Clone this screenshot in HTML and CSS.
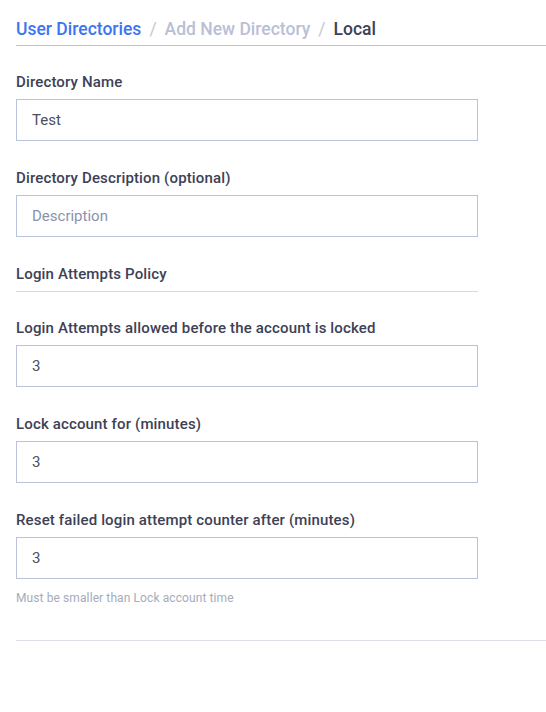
FILE: index.html
```html
<!DOCTYPE html>
<html lang="en">
<head>
    <meta charset="UTF-8">
    <meta name="viewport" content="width=device-width, initial-scale=1.0">
    <title>Add Directory - Local</title>
    <link rel="stylesheet" href="styles.css">
</head>
<body>
    <div class="page">
        <nav class="breadcrumb">
            <a href="#" class="crumb-link">User Directories</a>
            <span class="crumb-sep">/</span>
            <span class="crumb-muted">Add New Directory</span>
            <span class="crumb-sep">/</span>
            <span class="crumb-current">Local</span>
        </nav>

        <form class="dir-form">
            <div class="field">
                <label for="dir-name">Directory Name</label>
                <input type="text" id="dir-name" value="Test">
            </div>

            <div class="field">
                <label for="dir-desc">Directory Description (optional)</label>
                <input type="text" id="dir-desc" placeholder="Description">
            </div>

            <h3 class="section-title">Login Attempts Policy</h3>

            <div class="field">
                <label for="max-attempts">Login Attempts allowed before the account is locked</label>
                <input type="text" id="max-attempts" value="3">
            </div>

            <div class="field">
                <label for="lock-time">Lock account for (minutes)</label>
                <input type="text" id="lock-time" value="3">
            </div>

            <div class="field last">
                <label for="reset-time">Reset failed login attempt counter after (minutes)</label>
                <input type="text" id="reset-time" value="3">
                <p class="hint">Must be smaller than Lock account time</p>
            </div>
        </form>

        <div class="footer-line"></div>
    </div>
</body>
</html>
```

FILE: styles.css
```css
body {
    margin: 0;
    padding: 0;
    font-family: Roboto, 'Liberation Sans', sans-serif;
    background-color: #fff;
    color: #3d4156;
}
.page {
    padding-left: 16px;
}
.breadcrumb {
    padding: 17px 0 4px;
    line-height: 24px;
    font-size: 17.5px;
    border-bottom: 1px solid #b9c3db;
    display: flex;
    gap: 8px;
}
.crumb-link {
    color: #3d74f1;
    text-decoration: none;
    font-weight: 500;
}
.crumb-sep {
    color: #c3c8d6;
}
.crumb-muted {
    color: #b9c0d6;
    font-weight: 500;
}
.crumb-current {
    color: #3d4156;
    font-weight: 500;
}
.dir-form {
    width: 462px;
    margin-top: 26px;
}
.field {
    margin-bottom: 27px;
}
.field label,
.section-title {
    display: block;
    font-size: 15px;
    font-weight: 500;
    letter-spacing: 0.15px;
    line-height: 20px;
    color: #3d4156;
}
.field label {
    margin-bottom: 7px;
}
.field input {
    display: block;
    box-sizing: border-box;
    width: 100%;
    height: 42px;
    padding: 0 15px;
    border: 1px solid #b9c3db;
    border-radius: 0;
    font-family: inherit;
    font-size: 15px;
    color: #4a4f5f;
    outline: none;
}
.field input::placeholder {
    color: #8a92ad;
}
.section-title {
    margin: 0 0 26px;
    padding-bottom: 7px;
    border-bottom: 1px solid #d6dae5;
}
.field.last {
    margin-bottom: 0;
}
.hint {
    margin: 11px 0 0;
    font-size: 12px;
    letter-spacing: 0.1px;
    line-height: 16px;
    color: #a6abbc;
}
.footer-line {
    margin-top: 34px;
    border-top: 1px solid #dcdee7;
}
```
